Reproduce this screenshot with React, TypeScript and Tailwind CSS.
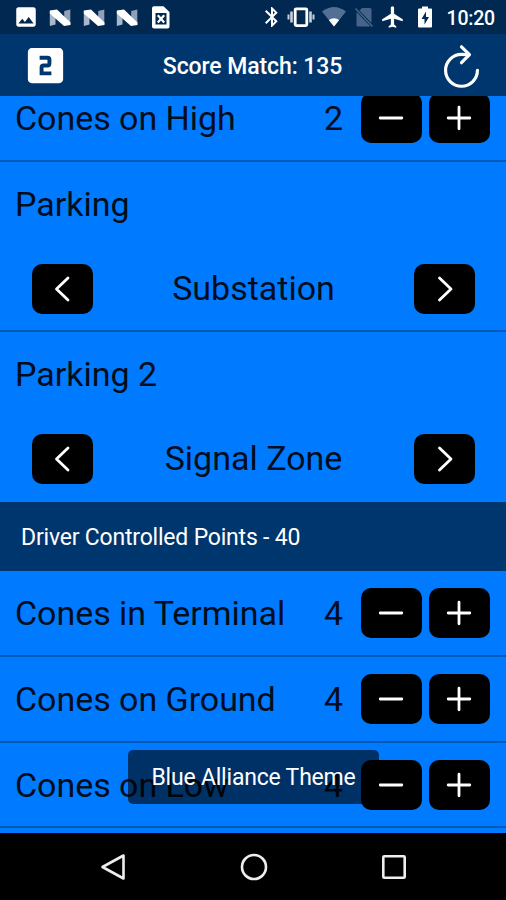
import type { ReactNode } from "react";
import { MdBluetooth, MdFlight, MdImage, MdLooksTwo } from "react-icons/md";

const driverRows = [
  { label: "Cones in Terminal", value: 4 },
  { label: "Cones on Ground", value: 4 },
  { label: "Cones on Low", value: 4 },
];

function NougatIcon() {
  return (
    <svg viewBox="0 0 26 26" className="w-[26px] h-[26px] shrink-0">
      <path d="M2.800 7.500H8.500V20.500L2.800 22Z" fill="#a9b7ca" />
      <path d="M17.200 7 23.300 5.500V20H17.200Z" fill="#8fa0b8" />
      <path d="M2.800 6.500 10 5.500 23.500 18.500v2.500l-6.500 1L2.800 9.500Z" fill="#fff" />
    </svg>
  );
}

function FileIcon() {
  return (
    <svg viewBox="0 0 26 26" className="w-[26px] h-[26px] shrink-0">
      <path
        fill="#fff"
        fillRule="evenodd"
        d="M6 2.200h9.500l6 5.800v14.500a2 2 0 0 1-2 2H6a2 2 0 0 1-2-2v-18.300a2 2 0 0 1 2-2ZM7.500 9v11.500h11V9Z"
      />
      <path d="m9.800 11.200 6.400 7.200M16.200 11.200l-6.400 7.200" stroke="#fff" strokeWidth="2.300" />
    </svg>
  );
}

function VibrateIcon() {
  return (
    <svg viewBox="0 0 28 22" className="w-7 h-[22px] shrink-0 ml-[3px]">
      <path d="M1.500 8.500v5M26.500 8.500v5" stroke="#c5cfdd" strokeWidth="2" />
      <path d="M4.500 5.500v11M23.500 5.500v11" stroke="#c5cfdd" strokeWidth="2.600" />
      <rect x="8.200" y="2.800" width="11.600" height="16.800" rx="1" fill="none" stroke="#fff" strokeWidth="2.800" />
    </svg>
  );
}

function WifiIcon() {
  return (
    <svg viewBox="0 0 26 22" className="w-[26px] h-[22px] shrink-0 ml-[6px]">
      <path d="M1 5.500Q13-3.500 25 5.500L13 20.500Z" fill="#526f94" />
      <path d="M7.800 14Q13 10.500 18.200 14L13 20.500Z" fill="#fff" />
    </svg>
  );
}

function NoSimIcon() {
  return (
    <svg viewBox="0 0 20 22" className="w-5 h-[22px] shrink-0 ml-[7px]">
      <path d="M8 2h8a1.500 1.500 0 0 1 1.500 1.500v13.500L5.500 4.500ZM3 6.500 16.500 20.500H4A1.500 1.500 0 0 1 2.500 19V6.500Z" fill="#46648a" />
      <path d="m1.500 2.500 17 18" stroke="#46648a" strokeWidth="1.600" />
    </svg>
  );
}

function BatteryIcon() {
  return (
    <svg viewBox="0 0 16 22" className="w-4 h-[22px] shrink-0 ml-[11px]">
      <path
        fill="#fff"
        fillRule="evenodd"
        d="M5 .5h6v2h3a1 1 0 0 1 1 1v17a1 1 0 0 1-1 1H2a1 1 0 0 1-1-1v-17a1 1 0 0 1 1-1h3ZM9 5.500l-4.500 7.500h3v5.500l4.500-7.500H9Z"
      />
    </svg>
  );
}

function StatusBar() {
  return (
    <div className="flex items-center h-[34px] shrink-0 bg-[#002850] text-white pl-[13px] pr-[11px]">
      <div className="flex items-center gap-[7.75px]">
        <MdImage className="w-[26px] h-[26px]" />
        <NougatIcon />
        <NougatIcon />
        <NougatIcon />
        <FileIcon />
      </div>
      <div className="flex items-center ml-auto">
        <MdBluetooth className="w-6 h-6" />
        <VibrateIcon />
        <WifiIcon />
        <NoSimIcon />
        <MdFlight className="w-[26px] h-[26px] ml-1.5" />
        <BatteryIcon />
        <span className="ml-[14px] pt-[3px] text-[19.5px] leading-none font-medium tracking-[-0.2px]">10:20</span>
      </div>
    </div>
  );
}

function Header() {
  return (
    <header className="relative z-10 flex items-center justify-between h-[62px] shrink-0 bg-[#00366e] text-white pl-[22px] pr-[19px]">
      <MdLooksTwo className="w-[47px] h-[47px]" />
      <h1 className="pt-1 text-[23px] font-medium tracking-[-0.1px]">Score Match: 135</h1>
      <svg
        viewBox="0 0 512 512"
        className="w-[51px] h-[51px] mt-0.5"
        fill="none"
        stroke="currentColor"
        strokeWidth="32"
        strokeLinecap="round"
        strokeLinejoin="round"
      >
        <path d="M320 146s24.360-12-64-12a160 160 0 1 0 160 160" />
        <path d="m256 58 80 80-80 80" />
      </svg>
    </header>
  );
}

function BlackButton({ label, children }: { label: string; children: ReactNode }) {
  return (
    <button
      aria-label={label}
      className="flex items-center justify-center w-[61px] h-[50px] shrink-0 rounded-[10px] bg-black text-white"
    >
      <svg
        viewBox="0 0 28 28"
        className="w-7 h-7 mr-px"
        fill="none"
        stroke="currentColor"
        strokeWidth="2.800"
        strokeLinecap="round"
        strokeLinejoin="round"
      >
        {children}
      </svg>
    </button>
  );
}

function CounterRow({ label, value }: { label: string; value: number }) {
  return (
    <div className="flex items-center h-[85.7px] shrink-0 pl-[15px] pr-[16px] border-b-2 border-[#0058b8]">
      <span className="text-[34px] leading-10 tracking-[-0.04px]">{label}</span>
      <span className="ml-auto mr-[18px] text-[34px] leading-10">{value}</span>
      <div className="flex gap-[7px]">
        <BlackButton label="Decrease">
          <path d="M3.200 14h21.600" />
        </BlackButton>
        <BlackButton label="Increase">
          <path d="M3.200 14h21.600M14 3.200v21.600" />
        </BlackButton>
      </div>
    </div>
  );
}

function PickerRow({ label, value, last }: { label: string; value: string; last?: boolean }) {
  return (
    <div className={`h-[170px] shrink-0 ${last ? "" : "border-b-2 border-[#0058b8]"}`}>
      <div className="h-[85px] flex items-center pt-px pl-[15px] text-[34px]">{label}</div>
      <div className="h-[84px] flex items-center justify-between pl-8 pr-[31px]">
        <BlackButton label="Previous">
          <path d="M20 3 8.500 14 20 25" />
        </BlackButton>
        <span className="text-[34px]">{value}</span>
        <BlackButton label="Next">
          <path d="m9.500 3 11.500 11-11.500 11" />
        </BlackButton>
      </div>
    </div>
  );
}

function Toast({ text }: { text: string }) {
  return (
    <div className="absolute left-[128px] bottom-[29px] z-20 flex items-center justify-center w-[251px] h-[54px] pt-[3px] rounded-[5px] bg-black/60 text-white text-[23px] tracking-[-0.2px]">
      {text}
    </div>
  );
}

function NavBar() {
  return (
    <nav className="flex items-center justify-between h-[67px] shrink-0 bg-black text-[#eee] pl-[98px] pr-[97px]">
      <svg viewBox="0 0 30 30" className="w-[30px] h-[30px]" fill="none" stroke="currentColor" strokeWidth="2.600" strokeLinejoin="round">
        <path d="M25.500 3.500v23L4.500 15Z" />
      </svg>
      <svg viewBox="0 0 30 30" className="w-[30px] h-[30px]" fill="none" stroke="currentColor" strokeWidth="2.600">
        <circle cx="15" cy="15" r="12" />
      </svg>
      <svg viewBox="0 0 30 30" className="w-[30px] h-[30px]" fill="none" stroke="currentColor" strokeWidth="2.600">
        <rect x="4.300" y="4.300" width="21.400" height="21.400" rx="1" />
      </svg>
    </nav>
  );
}

export default function App() {
  return (
    <div className="flex flex-col w-[506px] h-[900px] overflow-hidden bg-[#007bff] text-[#000d1c] font-['Roboto',sans-serif]">
      <StatusBar />
      <Header />
      <main className="relative flex-1 min-h-0">
        {/* list is scrolled, so the first row slides under the header */}
        <div className="flex flex-col h-full overflow-hidden">
          <div className="-mt-[20px] flex flex-col">
            <CounterRow label="Cones on High" value={2} />
            <PickerRow label="Parking" value="Substation" />
            <PickerRow label="Parking 2" value="Signal Zone" last />
            <div className="flex items-center h-[69.700px] shrink-0 bg-[#00366e] text-white text-[23px] tracking-[-0.2px] pt-[3px] pl-[21px]">
              Driver Controlled Points - 40
            </div>
            {driverRows.map((row) => (
              <CounterRow key={row.label} label={row.label} value={row.value} />
            ))}
          </div>
        </div>
        <Toast text="Blue Alliance Theme" />
      </main>
      <NavBar />
    </div>
  );
}
